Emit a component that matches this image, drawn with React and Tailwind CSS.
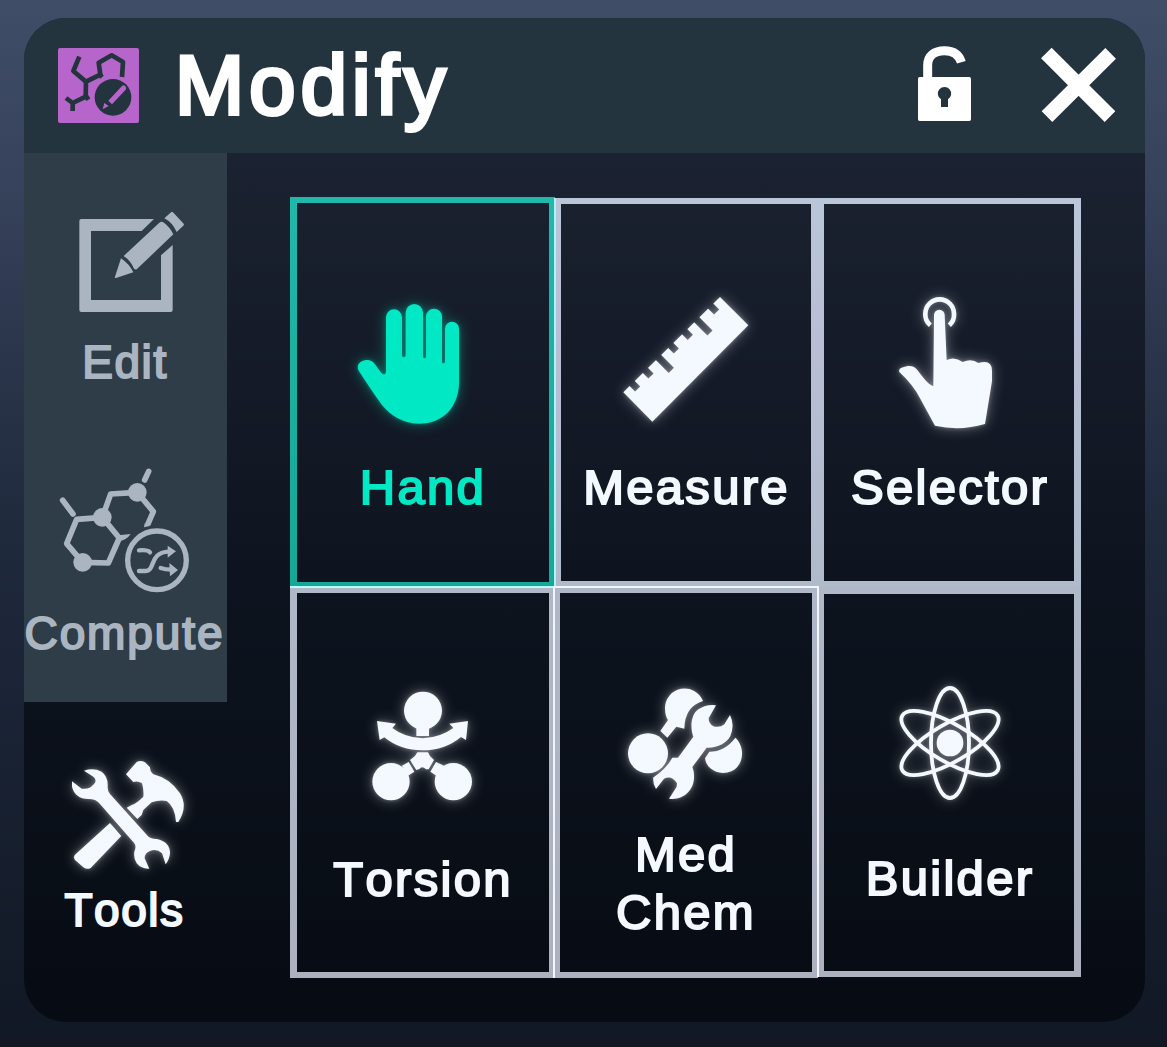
import React from "react";

const FONT = "font-['Liberation_Sans',Arial,sans-serif] [font-kerning:none] whitespace-nowrap";

// Artwork is authored on a 3x grid; `at` gives the origin of that grid.
function Art({ box, at, className, children }) {
  return (
    <svg viewBox={box} className={className} fill="currentColor">
      <g transform={`translate(${at}) scale(0.33333)`}>{children}</g>
    </svg>
  );
}

function LogoIcon() {
  return (
    <Art box="58 48 81 75" at="0 0" className="h-[75px] w-[81px] text-[#b665ca]">
      <rect x="174" y="144" width="243" height="225" rx="6" />
      <g fill="none" stroke="#24343e" strokeWidth="14" strokeLinejoin="round">
        <path d="M238 170L220 213L258 245L301 224L296 188L335 166L369 186L366 231" />
        <path d="M258 243L257 290L218 309V333M218 309L198 294M257 286L265 299M296 220L306 232" />
      </g>
      <circle cx="339" cy="292" r="55" fill="#24343e" />
      <path d="M325 302L366 258Q371 253 376 259Q381 264 377 269L336 313ZM313 309L326 318L308 328Z" />
    </Art>
  );
}

function LockIcon() {
  return (
    <Art box="915 44 60 80" at="860 0" className="h-20 w-[60px] text-white">
      <path d="M203 236V196C203 166 225 152 253 152C280 152 297 163 304 187" fill="none" stroke="currentColor" strokeWidth="27" />
      <path fillRule="evenodd" d="M179 231H328Q333 231 333 236V358Q333 363 328 363H179Q174 363 174 358V236Q174 231 179 231ZM243 298V321H264V298A20 20 0 1 0 243 298Z" />
    </Art>
  );
}

function CloseIcon() {
  return (
    <Art box="1038 44 80 80" at="860 0" className="size-20 text-white">
      <path d="M559 159L750 350M752 160L561 350" stroke="currentColor" strokeWidth="45" />
    </Art>
  );
}

function EditIcon() {
  return (
    <Art box="24 203 203 120" at="20 190" className="h-[120px] w-[203px]">
      <path d="M184 87H402L365 123H213V330H423V196L458 165V360Q458 366 452 366H184Q178 366 178 360V93Q178 87 184 87Z" />
      <path d="M311 198L418 98Q424 93 430 97Q450 112 460 133L350 238Q345 239 342 236Q332 212 311 198Z" />
      <path d="M303 205Q328 222 340 247L288 264Q283 265 285 260ZM433 85L453 67Q456 64 459 67L491 101Q493 104 490 107L470 126Q457 97 433 85Z" />
    </Art>
  );
}

function ComputeIcon() {
  return (
    <Art box="24 460 203 140" at="20 450" className="h-[140px] w-[203px]">
      <g fill="none" stroke="currentColor" strokeWidth="17" strokeLinejoin="round">
        <path d="M188 337L265 339L298 264L247 202L170 208L140 281Z" />
        <path d="M247 202L272 132L352 127L400 185L383 224" />
        <path d="M128 151L159 192M374 90L386 64" strokeLinecap="round" />
        <circle cx="411" cy="331" r="88" strokeWidth="16" />
        <path d="M357 301Q383 299 390 307M357 363H376C408 363 385 308 446 305M422 354Q435 359 455 359" strokeWidth="13" strokeLinecap="round" />
      </g>
      <path d="M295 256L332 252Q320 270 298 273ZM374 220L392 224L386 229L372 232Z" />
      <circle cx="188" cy="337" r="28" />
      <circle cx="247" cy="202" r="28" />
      <circle cx="352" cy="127" r="28" />
      <path d="M443 287L468 304L443 323ZM448 339L474 360L450 379Z" />
    </Art>
  );
}

const GLOW = "[filter:drop-shadow(0_0_2px_rgba(244,248,255,0.3))_drop-shadow(0_0_7px_rgba(244,248,255,0.35))]";

function ToolsIcon() {
  return (
    <Art box="24 750 203 130" at="20 740" className={`h-[130px] w-[203px] ${GLOW}`}>
      <path d="M192 92Q220 82 245 95Q265 110 263 140Q262 152 270 162L380 284Q390 297 410 297Q450 305 450 340Q448 360 437 373L426 340Q410 325 390 333Q373 340 374 355L388 386Q365 388 350 370Q340 355 343 335Q350 320 343 310L238 190Q228 177 205 177Q165 176 156 140V124L185 146Q210 150 225 128Q230 118 220 110Z" />
      <path d="M270 249L304 288L212 384Q200 390 190 382L165 360Q159 352 165 344Z" />
      <path d="M318 103L350 66Q362 60 375 67L390 82Q390 95 400 103Q450 115 480 160Q505 200 475 246H468Q465 200 440 183Q420 178 395 187L370 210L365 225L352 237L320 203L335 195Q350 190 370 170Q372 150 366 130Q355 122 340 126Z" />
    </Art>
  );
}

function HandIcon() {
  return (
    <Art box="297 280 252 160" at="280 180" className="h-40 w-[252px] [filter:drop-shadow(0_0_2px_rgba(0,232,196,0.3))_drop-shadow(0_0_7px_rgba(0,232,196,0.35))]">
      <path d="M318 412A24 24 0 0 1 366 412V526A5 5 0 0 0 377 526V398A26 26 0 0 1 429 398V530A4.500 4.500 0 0 0 438 530V410A24 24 0 0 1 486 410V545A4.500 4.500 0 0 0 495 545V446A21 21 0 0 1 537 446V605C537 680 490 731 416 731C372 731 330 706 306 675C280 640 258 604 238 575C224 552 245 540 262 540C272 540 280 546 286 554L304 579Q316 589 318 576Z" />
    </Art>
  );
}

function MeasureIcon() {
  return (
    <Art box="561 280 250 160" at="550 180" className={`h-40 w-[250px] ${GLOW}`}>
      <mask id="ruler-marks" maskUnits="userSpaceOnUse" x="180" y="320" width="450" height="430">
        <rect x="180" y="320" width="450" height="430" fill="white" />
        <path d="M500 396L465 361M480 459L423 402M421 472L385 436M379 513L343 477M364 571L305 512M303 588L267 552M263 627L227 591" stroke="black" strokeWidth="22" />
      </mask>
      <path mask="url(#ruler-marks)" d="M510 351L595 436L307 725L220 637Z" />
    </Art>
  );
}

function SelectorIcon() {
  return (
    <Art box="824 280 250 160" at="810 180" className={`h-40 w-[250px] ${GLOW}`}>
      <path d="M361 436A43 43 0 0 1 346 401A43 43 0 0 1 432 401A43 43 0 0 1 418 436" fill="none" stroke="currentColor" strokeWidth="14" />
      <path d="M372 405A16 16 0 0 1 404 405L410 540Q434 528 458 546Q485 534 505 549Q546 537 546 572V604L525 732Q450 754 375 737L330 655Q310 615 268 576Q265 566 275 563C300 554 312 558 322 570C338 590 350 610 370 619Z" />
    </Art>
  );
}

function TorsionIcon() {
  return (
    <Art box="297 670 252 160" at="280 640" className={`h-40 w-[252px] ${GLOW}`}>
      <circle cx="429" cy="212" r="57" />
      <circle cx="333" cy="425" r="56" />
      <circle cx="520" cy="425" r="56" />
      <path d="M409 250H447V288H409Z" />
      <path d="M291 243L348 251L337 264Q375 293 428 295Q480 293 520 264L508 251L564 243L558 300L543 291Q495 331 428 331Q360 331 313 292L299 300Z" />
      <path d="M412 337H444L450 348L462 360L446 388L438 388Q426 376 418 387L409 390L390 360L405 348Z" />
      <path d="M366 377L386 366L403 395L383 408ZM492 377L468 366L451 395L470 408Z" />
    </Art>
  );
}

function MedChemIcon() {
  return (
    <Art box="561 670 250 160" at="550 640" className={`h-40 w-[250px] ${GLOW}`}>
      <circle cx="294" cy="340" r="60" />
      <path d="M459 183A59 59 0 0 0 345 205Q345 228 354 240L331 273L352 293L379 260L403 266Q404 200 459 183Z" />
      <path d="M498 196Q470 192 445 208C422 224 420 265 430 290L384 353H367Q350 385 309 413Q309 432 318 447L342 416Q365 404 381 430L380 440L357 476C400 482 433 450 432 410Q433 395 427 381L470 323C500 325 530 310 541 288Q555 255 540 225L523 253Q510 264 490 259Q476 250 476 235Z" />
      <path d="M556 293C592 325 580 398 519 399C490 398 468 380 465 355L478 335Q525 335 556 293Z" />
    </Art>
  );
}

function BuilderIcon() {
  return (
    <Art box="824 670 250 160" at="810 640" className={`h-40 w-[250px] ${GLOW}`}>
      <g fill="none" stroke="currentColor" strokeWidth="11.500">
        <ellipse cx="420" cy="309" rx="57" ry="165" />
        <ellipse cx="420" cy="309" rx="57" ry="165" transform="rotate(60 420 309)" />
        <ellipse cx="420" cy="309" rx="57" ry="165" transform="rotate(-60 420 309)" />
      </g>
      <circle cx="420" cy="309" r="40" />
    </Art>
  );
}

const LABEL = "text-[49px] tracking-[2.3px] [-webkit-text-stroke:2px_currentColor]";
const TAB = "text-[46px] leading-none [-webkit-text-stroke:2px_currentColor]";
const GREY_TOP = "[border-image:linear-gradient(#b9c6d9,#b9bfd6_30%,#afbbcb)_1]";
const GREY_BOTTOM = "[border-image:linear-gradient(#afb8c8,#acb0bf)_1]";

export default function App() {
  return (
    <div className={`flex h-[1047px] w-[1167px] flex-col bg-linear-[180deg,#404d67_0%,#37435c_17%,#2b364c_33%,#1f293c_52%,#192233_72%,#111824_100%] pt-[18px] pl-6 ${FONT}`}>
      <main className="flex h-[1004px] w-[1121px] flex-col overflow-hidden rounded-[42px] bg-linear-[180deg,#1b2231_13%,#0e141f_55%,#070c14_96%]">
        <header className="flex h-[135px] shrink-0 items-start bg-[#24343e]">
          <div className="mt-[30px] ml-[34px]"><LogoIcon /></div>
          <h1 className="mt-[26px] ml-[36px] text-[83px] leading-none tracking-[5.2px] text-white [-webkit-text-stroke:4px_currentColor]">Modify</h1>
          <button className="mt-[26px] ml-auto"><LockIcon /></button>
          <button className="mt-[26px] mr-[27px] ml-[63px]"><CloseIcon /></button>
        </header>

        <div className="flex grow">
          <nav className="flex w-[203px] flex-col">
            <div className="flex h-[549px] flex-col items-center bg-[#2e3d47] text-[#aab5c1]">
              <button className="mt-[50px] flex h-[257px] flex-col items-center">
                <EditIcon />
                <span className={`mt-4 mr-px tracking-[1.6px] ${TAB}`}>Edit</span>
              </button>
              <button className="flex flex-col items-center">
                <ComputeIcon />
                <span className={`mt-[10px] mr-[2px] tracking-[1.9px] ${TAB}`}>Compute</span>
              </button>
            </div>
            <button className="mt-12 flex flex-col items-center text-[#f4f8ff]">
              <ToolsIcon />
              <span className={`mt-[7px] mr-[2px] tracking-[1.5px] ${TAB}`}>Tools</span>
            </button>
          </nav>

          <section className="relative mt-11 ml-[63px] grid h-[781px] w-[791px] grid-cols-[265px_263px_263px] grid-rows-[390px_391px] text-[#f4f8ff]">
            <button className="flex flex-col items-center border-t-[6px] border-r-[6px] border-b-[5px] border-l-[7px] text-[#00e8c4] [border-image:linear-gradient(#1fb8ab,#14a898)_1]">
              <div className="mt-[77px]"><HandIcon /></div>
              <span className={`mt-[23px] leading-none ${LABEL}`}>Hand</span>
            </button>
            <button className={`mt-px flex flex-col items-center border-t-[6px] border-r-[7px] border-b-[6px] border-l-[6px] ${GREY_TOP}`}>
              <div className="mt-[76px]"><MeasureIcon /></div>
              <span className={`mt-[23px] ml-px leading-none ${LABEL}`}>Measure</span>
            </button>
            <button className={`mt-px flex flex-col items-center border-t-[6px] border-r-[7px] border-b-[6px] border-l-[6px] ${GREY_TOP}`}>
              <div className="mt-[76px]"><SelectorIcon /></div>
              <span className={`mt-[23px] ml-[2px] leading-none ${LABEL}`}>Selector</span>
            </button>
            <button className={`flex flex-col items-center border-t-[6px] border-r-[6px] border-b-[6px] border-l-[7px] ${GREY_BOTTOM}`}>
              <div className="mt-[77px]"><TorsionIcon /></div>
              <span className={`mt-[25px] leading-none ${LABEL}`}>Torsion</span>
            </button>
            <button className={`flex flex-col items-center border-t-[6px] border-r-[6px] border-b-[6px] border-l-[5px] ${GREY_BOTTOM}`}>
              <div className="mt-[77px]"><MedChemIcon /></div>
              <span className={`-mt-[5px] text-center leading-[58px] ${LABEL}`}>Med<br />Chem</span>
            </button>
            <button className={`mb-px flex flex-col items-center border-t-[7px] border-r-[7px] border-b-[6px] border-l-[6px] ${GREY_BOTTOM}`}>
              <div className="mt-[76px]"><BuilderIcon /></div>
              <span className={`mt-6 ml-[2px] leading-none ${LABEL}`}>Builder</span>
            </button>

            {/* bright seams where neighbouring frames overlap */}
            <span className="absolute top-px left-[264px] h-[389px] w-[2px] bg-[#b4f0f5]" />
            <span className="absolute top-[389px] left-0 h-[2px] w-[265px] bg-[#b9fff8]" />
            <span className="absolute top-[389px] left-[263px] h-[2px] w-[265px] bg-[#f2f6ff]" />
            <span className="absolute top-[389px] left-[263px] h-[392px] w-[2px] bg-[#f4f5fc]" />
            <span className="absolute top-[389px] left-[527px] h-[391px] w-[2px] bg-[#f4f5fc]" />
          </section>
        </div>
      </main>
    </div>
  );
}
